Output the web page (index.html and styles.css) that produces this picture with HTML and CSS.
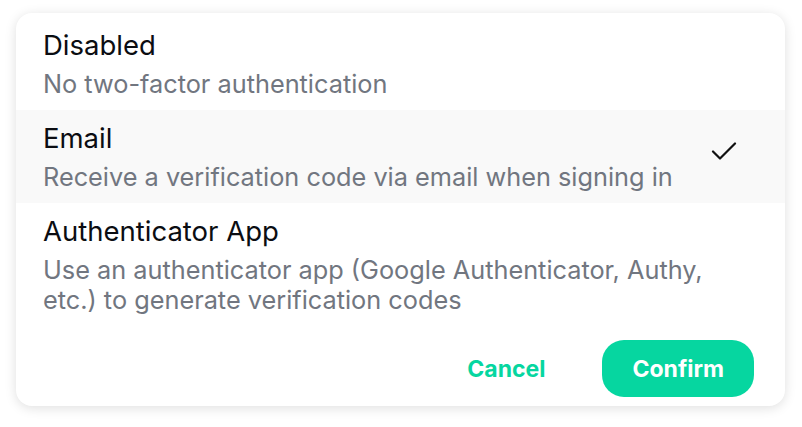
FILE: index.html
```html
<!DOCTYPE html>
<html lang="en">
<head>
    <meta charset="UTF-8">
    <title>Two-factor authentication</title>
    <link rel="stylesheet" href="styles.css">
</head>
<body>
    <div class="dialog">
        <ul class="options">
            <li class="option">
                <div class="option_text">
                    <div class="option_title">Disabled</div>
                    <div class="option_desc">No two-factor authentication</div>
                </div>
            </li>
            <li class="option selected">
                <div class="option_text">
                    <div class="option_title">Email</div>
                    <div class="option_desc">Receive a verification code via email when signing in</div>
                </div>
                <svg class="check" width="26" height="19" viewBox="0 0 26 19">
                    <path d="M2 9.5 L9 16.5 L24 1.5" fill="none" stroke="#111" stroke-width="2.2" stroke-linecap="round" stroke-linejoin="round"/>
                </svg>
            </li>
            <li class="option">
                <div class="option_text">
                    <div class="option_title">Authenticator App</div>
                    <div class="option_desc">Use an authenticator app (Google Authenticator, Authy, etc.) to generate verification codes</div>
                </div>
            </li>
        </ul>
        <div class="actions">
            <button class="btn btn_text">Cancel</button>
            <button class="btn btn_primary">Confirm</button>
        </div>
    </div>
</body>
</html>
```

FILE: styles.css
```css
*{
    margin:0;
    padding:0;
    box-sizing: border-box;
}
body{
    background-color: #fff;
    font-family: Inter, "Noto Sans", sans-serif;
    padding: 13px 17px 21px 16px;
}
li{
    list-style: none;
}
.dialog{
    background-color: #fff;
    border-radius: 16px;
    box-shadow: 0 2px 12px rgba(0,0,0,0.13);
    height: 393px;
    padding-top: 4px;
    display: flex;
    flex-direction: column;
}
.option{
    display: flex;
    align-items: center;
    justify-content: space-between;
    padding: 11px 48px 11px 27px;
}
.option.selected{
    background-color: #f9f9f9;
}
.option_text{
    max-width: 690px;
}
.option_title{
    font-size: 27.5px;
    line-height: 34px;
    color: #0b0d12;
}
.option_desc{
    margin-top: 7px;
    font-size: 25.3px;
    line-height: 30px;
    color: #717680;
}
.check{
    flex-shrink: 0;
    margin-bottom: 10px;
}
.actions{
    margin-top: auto;
    display: flex;
    justify-content: flex-end;
    gap: 27px;
    padding: 0 31px 9px 0;
}
.btn{
    font-family: Inter, "Noto Sans", sans-serif;
    font-size: 23px;
    font-weight: 700;
    border: none;
    border-radius: 22px;
    height: 57px;
    padding: 0 30px;
    cursor: pointer;
}
.btn_text{
    background: none;
    color: #06d6a0;
}
.btn_primary{
    background-color: #06d6a0;
    color: #fff;
}
```
